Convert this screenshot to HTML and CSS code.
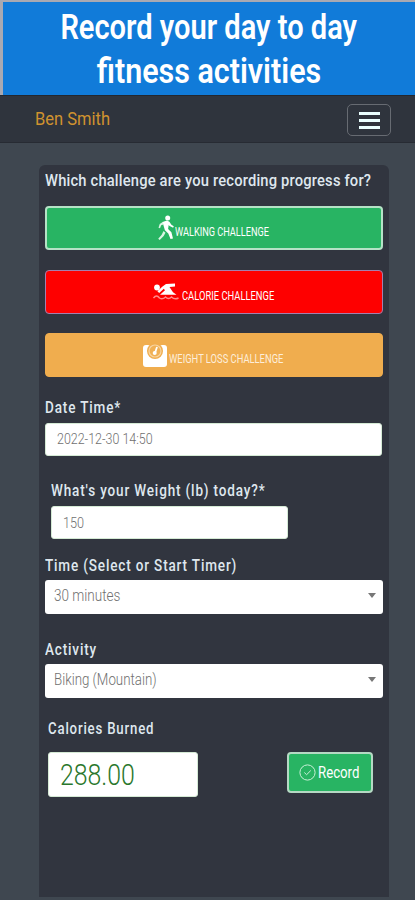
FILE: index.html
```
<!DOCTYPE html>
<html lang="en">

<head>
    <meta charset="UTF-8">
    <meta name="viewport" content="width=device-width, initial-scale=1.0">
    <title>Record Activity</title>
    <link rel="stylesheet" href="styles.css">
</head>

<body>
    <header class="banner">
        <h1><span class="line line-one">Record your day to day</span><span class="line line-two">fitness activities</span></h1>
    </header>

    <nav>
        <a class="brand"><span class="line">Ben Smith</span></a>
        <button class="menu">
            <span></span>
            <span></span>
            <span></span>
        </button>
    </nav>

    <main class="panel">
        <h2 class="label question"><span class="line">Which challenge are you recording progress for?</span></h2>

        <button class="btn walking">
            <svg width="16" height="26" viewBox="0 0 16 26">
                <circle cx="9.700" cy="3" r="2.500" fill="#fff" />
                <path d="M4.500 7l4.500-1.500 2.400 1.200 2 3 2.400 1.500-.7 1.500-3.500-1.600-.9-1-.6 4 3.300 3.200 1.600 6.200-2.500.6-2.200-5.600-3.400-3.200z" fill="#fff" />
                <path d="M5 6.800L1.700 9l-1.200 3.800 1.500.5L3.200 10.200l2.200-.7zM5.500 16l2 1.800-1.800 3.200-4 4-1.500-1.300 3.500-4z" fill="#d9f5e3" />
            </svg>
            <span class="line">WALKING CHALLENGE</span>
        </button>
        <button class="btn calorie">
            <svg width="26" height="18" viewBox="0 0 26 18">
                <circle cx="4" cy="4.500" r="2.900" fill="#fff" />
                <path d="M9.500 3.500l3.500-2.500 9-.5v2.900l-5.500.5 3.500 5.300 3.500 2.600H7l5-4.500-1.200-1.600-4.600 4.400-1.800-1.900z" fill="#fff" />
                <path d="M.5 15q3-4 6 0 3 2 6-1 3 3 6 0 3 3 7 1" fill="none" stroke="#ff8a8a" stroke-width="1.400" />
            </svg>
            <span class="line">CALORIE CHALLENGE</span>
        </button>
        <button class="btn weight-loss">
            <svg width="24" height="24" viewBox="0 0 24 24">
                <rect x="0" y="2" width="24" height="22" rx="3" fill="#fff" />
                <circle cx="12" cy="8" r="8" fill="#f0ad4e" />
                <circle cx="12" cy="8" r="6" fill="#f0b055" stroke="#f8d5a2" stroke-width="1.200" />
                <path d="M12 10l2-6" stroke="#fff" stroke-width="1.800" />
                <circle cx="11.700" cy="10" r="2" fill="#fff" />
            </svg>
            <span class="line">WEIGHT LOSS CHALLENGE</span>
        </button>

        <div class="field date">
            <label class="label"><span class="line">Date Time*</span></label>
            <div class="input"><span class="line">2022-12-30 14:50</span></div>
        </div>

        <div class="field weight">
            <label class="label"><span class="line">What's your Weight (lb) today?*</span></label>
            <div class="input"><span class="line">150</span></div>
        </div>

        <div class="field time">
            <label class="label"><span class="line">Time (Select or Start Timer)</span></label>
            <div class="select"><span class="line">30 minutes</span><i class="caret"></i></div>
        </div>

        <div class="field activity">
            <label class="label"><span class="line">Activity</span></label>
            <div class="select"><span class="line">Biking (Mountain)</span><i class="caret"></i></div>
        </div>

        <div class="field calories">
            <label class="label"><span class="line">Calories Burned</span></label>
            <div class="row">
                <div class="input"><span class="line">288.00</span></div>
                <button class="btn record">
                    <svg width="17" height="17" viewBox="0 0 17 17" fill="none" stroke="#c9f0d8">
                        <circle cx="8.500" cy="8.500" r="7.600" />
                        <path d="M5.300 8.500l2.300 2.200 4.200-4.200" />
                    </svg>
                    <span class="line">Record</span>
                </button>
            </div>
        </div>
    </main>
</body>

</html>
```
FILE: styles.css
```
* {
    padding: 0;
    margin: 0;
    box-sizing: border-box;
}

body {
    height: 900px;
    overflow: hidden;
    display: flex;
    flex-direction: column;
    background-color: #3f4750;
    font-family: Roboto, "Liberation Sans", sans-serif;
}

button {
    font-family: inherit;
}

/* condensed lettering */
.line {
    display: inline-block;
    flex: none;
    white-space: nowrap;
    transform: scaleX(0.845);
    transform-origin: left center;
}

.banner {
    height: 95px;
    padding-top: 4px;
    border-top: 2px solid #a9a9b2;
    border-left: 3px solid #a9a9b2;
    background-color: #117bd9;
    color: #fff;
}

.banner h1 {
    display: flex;
    flex-direction: column;
    align-items: center;
    font-size: 35px;
    font-weight: 600;
    line-height: 44px;
}

.banner .line {
    transform: scaleX(0.83);
    transform-origin: center;
}

.banner .line-two {
    transform: scaleX(0.87);
}

nav {
    height: 48px;
    display: flex;
    justify-content: space-between;
    align-items: center;
    padding: 2px 24px 0 35px;
    background-color: #2f343d;
    border-top: 1px solid #23272f;
    border-bottom: 1px solid #272b33;
}

.brand {
    margin-top: -3px;
    color: #cf922f;
    font-size: 19px;
}

.brand .line {
    transform: scaleX(0.87);
}

.menu {
    width: 44px;
    height: 32px;
    display: flex;
    flex-direction: column;
    justify-content: center;
    align-items: center;
    gap: 4px;
    background: none;
    border: 1px solid #676b72;
    border-radius: 5px;
}

.menu span {
    width: 21px;
    height: 3px;
    background-color: #eaffff;
}

.panel {
    width: 350px;
    height: 732px;
    margin: 22px 0 0 39px;
    padding: 6px 6px 0;
    background-color: #31353f;
    border-radius: 6px 6px 0 0;
}

.label {
    display: block;
    height: 20px;
    overflow: hidden;
    line-height: 20px;
    font-size: 16px;
    font-weight: 500;
    letter-spacing: 1px;
    color: #dfe7ee;
}

/* the longest label, set tighter so it stays inside the panel */
.question {
    letter-spacing: 0.2px;
}

.question .line {
    transform: scaleX(0.92);
}

.field .label {
    line-height: 22px;
}

.btn {
    width: 338px;
    height: 44px;
    display: flex;
    align-items: center;
    border-radius: 4px;
    color: #fff;
    font-size: 12.5px;
}

.walking {
    margin-top: 15px;
    padding-left: 111px;
    gap: 1px;
    background-color: #28b463;
    border: 2px solid #b5e2c6;
}

.calorie {
    margin-top: 20px;
    padding-left: 107px;
    gap: 3px;
    background-color: #fe0000;
    border: 1px solid #a57fae;
}

.weight-loss {
    margin-top: 19px;
    padding-left: 97px;
    gap: 2px;
    background-color: #f0ad4e;
    border: 1px solid #f0ad4e;
}

.walking .line,
.calorie .line,
.weight-loss .line {
    margin-top: 6px;
    transform: scaleX(0.75);
}

.walking .line {
    transform: scaleX(0.735);
}

.weight-loss .line {
    color: #fdeedb;
}

.input,
.select {
    height: 33px;
    background-color: #fff;
    border-radius: 3px;
    display: flex;
    align-items: center;
    color: #707070;
    font-weight: 300;
    font-size: 15px;
}

.input {
    padding-left: 11px;
    border: 1px solid #d5ead5;
}

.date {
    margin-top: 20px;
}

.date .input {
    margin-top: 6px;
    padding-bottom: 2px;
    width: 337px;
}

.date .input .line {
    transform: scaleX(0.83);
}

.weight {
    margin: 24px 0 0 6px;
}

.weight .input {
    margin-top: 6px;
    width: 237px;
}

.time {
    margin-top: 16px;
}

.select {
    height: 34px;
    margin-top: 5px;
    padding: 0 7px 3px 9px;
    justify-content: space-between;
    font-size: 16px;
}

.activity .select .line {
    transform: scaleX(0.832);
}

.caret {
    border: 4px solid transparent;
    border-top: 5px solid #777;
    border-bottom: none;
}

.activity {
    margin-top: 25px;
}

.calories {
    margin: 20px 0 0 3px;
}

.calories .label .line,
.record .line {
    transform: scaleX(0.825);
}

.row {
    display: flex;
    margin-top: 14px;
}

.calories .input {
    width: 150px;
    height: 45px;
    color: #2a772c;
    font-size: 29px;
}

.calories .input .line {
    transform: scaleX(0.857);
}

.record {
    width: 86px;
    height: 41px;
    margin-left: 89px;
    padding-left: 10px;
    gap: 2px;
    background-color: #28b463;
    border: 2px solid #b5d9c4;
    font-size: 16px;
}
```
